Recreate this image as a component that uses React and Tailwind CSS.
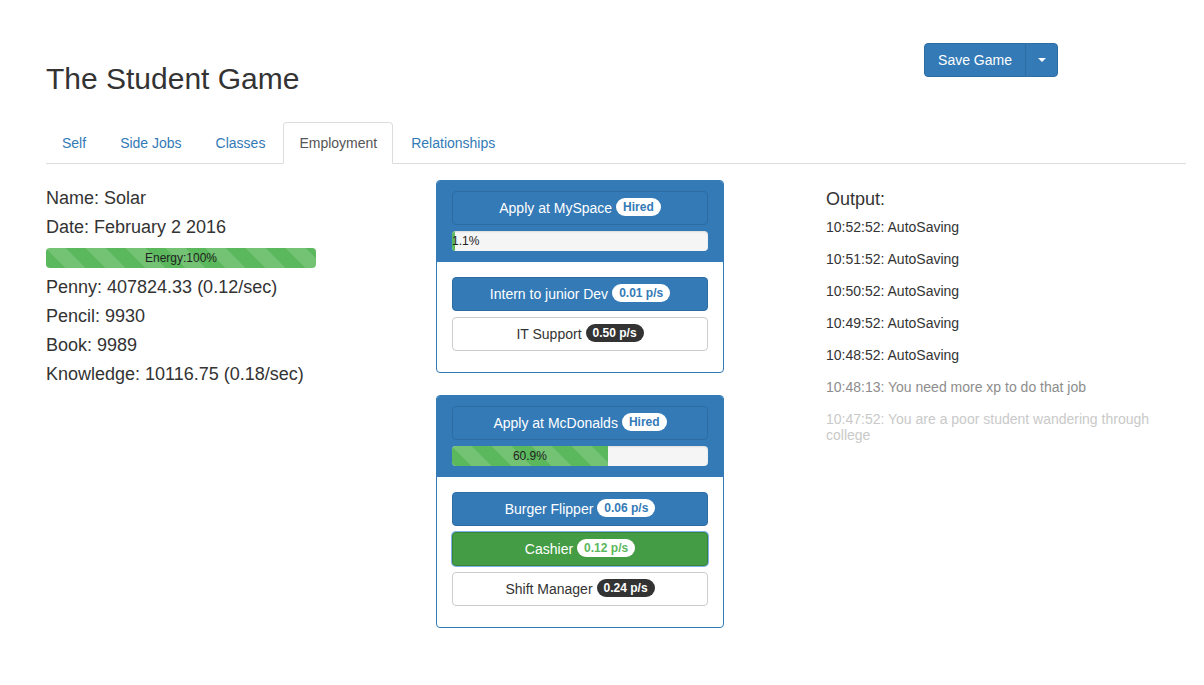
const stripes =
  "bg-[linear-gradient(45deg,rgba(255,255,255,.15)_25%,transparent_25%,transparent_50%,rgba(255,255,255,.15)_50%,rgba(255,255,255,.15)_75%,transparent_75%,transparent)] bg-size-[40px_40px]";

function Badge({ tone, children }) {
  const tones = {
    primary: "bg-white text-[#337ab7]",
    success: "bg-white text-[#5cb85c]",
    dark: "bg-[#333] text-white",
  };
  return (
    <span
      className={`relative -top-px ml-[4px] inline-block rounded-[10px] px-[7px] py-[3px] text-[12px] font-bold leading-none ${tones[tone]}`}
    >
      {children}
    </span>
  );
}

function JobButton({ variant, label, rate }) {
  const styles = {
    primary: "bg-[#337ab7] border-[#2e6da4] text-white",
    success: "bg-[#449d44] border-[#398439] text-white shadow-[0_0_0_1px_#7fb2e8]",
    default: "bg-white border-[#ccc] text-[#333]",
  };
  const badge = { primary: "primary", success: "success", default: "dark" };
  return (
    <div
      className={`flex h-[34px] items-center justify-center rounded-[4px] border text-[14px] ${styles[variant]}`}
    >
      {label}
      <Badge tone={badge[variant]}>{rate}</Badge>
    </div>
  );
}

function Progress({ value, label }) {
  return (
    <div className="mt-[6px] h-[20px] overflow-hidden rounded-[4px] bg-[#f5f5f5] shadow-[inset_0_1px_2px_rgba(0,0,0,.1)]">
      <div
        className={`h-full whitespace-nowrap bg-[#5cb85c] text-center text-[12px] leading-[20px] text-[#222] ${stripes}`}
        style={{ width: `${value}%` }}
      >
        {label}
      </div>
    </div>
  );
}

function JobPanel({ company, progress, jobs, className = "" }) {
  return (
    <div className={`w-[288px] overflow-hidden rounded-[4px] border border-[#337ab7] bg-white ${className}`}>
      <div className="border-b border-[#337ab7] bg-[#337ab7] px-[15px] pt-[10px] pb-[10px]">
        <div className="flex h-[34px] items-center justify-center rounded-[4px] border border-[#2d6ca2] text-[14px] text-white">
          Apply at {company}
          <Badge tone="primary">Hired</Badge>
        </div>
        <Progress value={progress} label={`${progress}%`} />
      </div>
      <div className="flex flex-col gap-[6px] px-[15px] pt-[15px] pb-[21px]">
        {jobs.map((j) => (
          <JobButton key={j.label} {...j} />
        ))}
      </div>
    </div>
  );
}

const log = [
  { t: "10:52:52: AutoSaving", c: "text-[#333]" },
  { t: "10:51:52: AutoSaving", c: "text-[#333]" },
  { t: "10:50:52: AutoSaving", c: "text-[#333]" },
  { t: "10:49:52: AutoSaving", c: "text-[#333]" },
  { t: "10:48:52: AutoSaving", c: "text-[#333]" },
  { t: "10:48:13: You need more xp to do that job", c: "text-[#8d8d8d]" },
  { t: "10:47:52: You are a poor student wandering through college", c: "text-[#c9c9c9]" },
];

const tabs = ["Self", "Side Jobs", "Classes", "Employment", "Relationships"];

export default function App() {
  return (
    <div className="min-h-[685px] bg-white font-['Liberation_Sans',Arial,sans-serif] text-[14px] text-[#333]">
      <div className="ml-[46px] w-[1140px]">
        {/* Header */}
        <div className="flex items-start justify-between">
          <h2 className="mt-[62px] text-[30px] leading-[33px]">The Student Game</h2>
          <div className="mt-[43px] mr-[128px] flex h-[34px] text-white">
            <div className="flex items-center rounded-l-[4px] border border-[#2e6da4] bg-[#337ab7] px-[13px]">
              Save Game
            </div>
            <div className="-ml-px flex w-[33px] items-center justify-center rounded-r-[4px] border border-[#2e6da4] bg-[#337ab7]">
              <span className="h-0 w-0 border-x-4 border-t-4 border-x-transparent border-t-white" />
            </div>
          </div>
        </div>

        {/* Tabs */}
        <ul className="mt-[27px] flex border-b border-[#ddd]">
          {tabs.map((t) => (
            <li key={t} className="-mb-px mr-[2px]">
              <span
                className={`block rounded-t-[4px] border px-[15px] py-[10px] leading-[20px] ${
                  t === "Employment"
                    ? "border-[#ddd] border-b-white bg-white text-[#555]"
                    : "border-transparent text-[#337ab7]"
                }`}
              >
                {t}
              </span>
            </li>
          ))}
        </ul>

        {/* Content */}
        <div className="flex">
          <div className="flex w-[390px] flex-col gap-[9px] pt-[24px] text-[18px] leading-[20px]">
            <div>Name: Solar</div>
            <div>Date: February 2 2016</div>
            <div className={`mt-[2px] h-[20px] w-[270px] rounded-[4px] bg-[#5cb85c] text-center text-[12px] leading-[20px] text-[#222] ${stripes}`}>
              Energy:100%
            </div>
            <div>Penny: 407824.33 (0.12/sec)</div>
            <div>Pencil: 9930</div>
            <div>Book: 9989</div>
            <div>Knowledge: 10116.75 (0.18/sec)</div>
          </div>

          <div className="w-[390px] pt-[16px]">
            <JobPanel
              company="MySpace"
              progress={1.1}
              jobs={[
                { variant: "primary", label: "Intern to junior Dev", rate: "0.01 p/s" },
                { variant: "default", label: "IT Support", rate: "0.50 p/s" },
              ]}
            />
            <JobPanel
              className="mt-[22px]"
              company="McDonalds"
              progress={60.9}
              jobs={[
                { variant: "primary", label: "Burger Flipper", rate: "0.06 p/s" },
                { variant: "success", label: "Cashier", rate: "0.12 p/s" },
                { variant: "default", label: "Shift Manager", rate: "0.24 p/s" },
              ]}
            />
          </div>

          <div className="w-[360px] pt-[25px]">
            <div className="text-[18px] leading-[20px]">Output:</div>
            <div className="mt-[10px] flex flex-col gap-[16px] leading-[16px]">
              {log.map((l) => (
                <div key={l.t} className={l.c}>
                  {l.t}
                </div>
              ))}
            </div>
          </div>
        </div>
      </div>
    </div>
  );
}
